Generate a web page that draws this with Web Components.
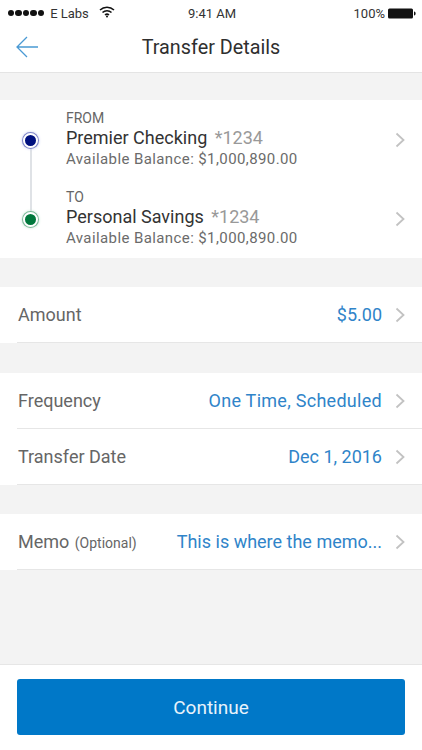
<!DOCTYPE html>
<html>
<head>
<meta charset="utf-8">
<title>Transfer Details</title>
<style>
    html, body { margin: 0; padding: 0; height: 100%; }
    body { font-family: Roboto, "Liberation Sans", sans-serif; background: #f3f3f3; overflow: hidden; }
</style>
</head>
<body>
<transfer-screen>
    <status-bar></status-bar>
    <nav-header title="Transfer Details"></nav-header>
    <div slot="content">
        <account-card></account-card>
        <detail-group gap="29">
            <detail-row label="Amount" value="$5.00"></detail-row>
        </detail-group>
        <detail-group gap="30">
            <detail-row label="Frequency" value="One Time, Scheduled" spacing="0.28"></detail-row>
            <detail-row label="Transfer Date" value="Dec 1, 2016"></detail-row>
        </detail-group>
        <detail-group gap="29">
            <detail-row label="Memo" note="(Optional)" value="This is where the memo..."></detail-row>
        </detail-group>
    </div>
    <footer-button slot="footer" label="Continue"></footer-button>
</transfer-screen>

<script>
const CHEVRON = /*html*/`
    <svg class="chevron" width="10" height="16" viewBox="0 0 10 16" fill="none">
        <path d="M1.5 1.5 L8.5 8 L1.5 14.5" stroke="#c2c2c2" stroke-width="1.8"/>
    </svg>
`;

class TransferScreen extends HTMLElement {
    connectedCallback() {
        this.attachShadow({mode: 'open'});
        this.shadowRoot.innerHTML = /*html*/`
            <style>
                :host {
                    display: flex;
                    flex-direction: column;
                    width: 422px;
                    height: 750px;
                    background: #f3f3f3;
                }
                #content { flex: 1; padding-top: 27px; }
            </style>
            <slot></slot>
            <div id="content"><slot name="content"></slot></div>
            <slot name="footer"></slot>
        `;
    }
}

class StatusBar extends HTMLElement {
    connectedCallback() {
        this.attachShadow({mode: 'open'});
        this.shadowRoot.innerHTML = /*html*/`
            <style>
                :host {
                    display: grid;
                    grid-template-columns: 1fr auto 1fr;
                    align-items: center;
                    height: 26px;
                    padding: 0 6px 0 8px;
                    background: #fff;
                    color: #333;
                    font-size: 13px;
                }
                .left, .right { display: flex; align-items: center; }
                .right { justify-content: flex-end; gap: 3px; }
                .dots { display: flex; gap: 1.3px; margin-right: 6px; }
                .dots i { width: 6.2px; height: 6.2px; border-radius: 50%; background: #111; }
                .wifi { margin-left: 10px; margin-top: -3px; }
            </style>
            <div class="left">
                <span class="dots"><i></i><i></i><i></i><i></i><i></i></span>
                <span>E Labs</span>
                <svg class="wifi" width="16" height="12" viewBox="0 0 16 12" fill="none" stroke="#111">
                    <path d="M1 4 A10 10 0 0 1 15 4" stroke-width="1.5"/>
                    <path d="M3.5 6.5 A6.5 6.5 0 0 1 12.5 6.5" stroke-width="1.5"/>
                    <path d="M6 9 A3 3 0 0 1 10 9" stroke-width="1.5"/>
                    <circle cx="8" cy="10.6" r="1" fill="#111" stroke="none"/>
                </svg>
            </div>
            <div>9:41 AM</div>
            <div class="right">
                <span>100%</span>
                <svg width="28" height="11" viewBox="0 0 28 11">
                    <rect x="0" y="0.5" width="25" height="10" rx="1.5" fill="#111"/>
                    <path d="M26 3.5 C27.3 3.8 27.6 4.5 27.6 5.5 C27.6 6.5 27.3 7.2 26 7.5 Z" fill="#111"/>
                </svg>
            </div>
        `;
    }
}

class NavHeader extends HTMLElement {
    connectedCallback() {
        this.attachShadow({mode: 'open'});
        this.shadowRoot.innerHTML = /*html*/`
            <style>
                :host {
                    display: grid;
                    grid-template-columns: 60px 1fr 60px;
                    align-items: center;
                    height: 42px;
                    padding-bottom: 4px;
                    background: #fff;
                    border-bottom: 1px solid #e4e4e4;
                }
                svg { margin-left: 16px; }
                h1 {
                    margin: 0;
                    text-align: center;
                    font-size: 19.8px;
                    font-weight: 400;
                    color: #2f2f2f;
                }
            </style>
            <svg width="22" height="22" viewBox="0 0 22 22" fill="none" stroke="#4a9ad4" stroke-width="1.3">
                <path d="M22 11 H1 M11 1 L1 11 L11 21"/>
            </svg>
            <h1>${this.getAttribute("title")}</h1>
            <span></span>
        `;
    }
}

class AccountCard extends HTMLElement {
    #makeAccount(cls, label, name, balance) {
        return /*html*/`
            <div class="account ${cls}">
                <div class="dot"></div>
                <div class="text">
                    <div class="label">${label}</div>
                    <div class="name">${name} <span>*1234</span></div>
                    <div class="balance">${balance}</div>
                </div>
                ${CHEVRON}
            </div>
        `;
    }

    connectedCallback() {
        this.attachShadow({mode: 'open'});
        const balance = "Available Balance: $1,000,890.00";
        this.shadowRoot.innerHTML = /*html*/`
            <style>
                :host {
                    display: block;
                    position: relative;
                    background: #fff;
                    height: 158px;
                    box-sizing: border-box;
                    padding-top: 6px;
                }
                .line {
                    position: absolute;
                    left: 30px;
                    top: 40px;
                    width: 1.5px;
                    height: 78px;
                    background: #dfe2e6;
                }
                .account {
                    display: flex;
                    align-items: center;
                    height: 68px;
                    padding: 0 17px 0 23px;
                    position: relative;
                }
                .account + .account { margin-top: 11px; }
                .dot {
                    width: 11px;
                    height: 11px;
                    border-radius: 50%;
                    border: 2px solid #fff;
                    flex: none;
                    margin-right: 28px;
                }
                .from .dot { background: #00107f; box-shadow: 0 0 0 1px #7f86c8, 0 0 3px 1px #c9cdf0; }
                .to .dot { background: #00783c; box-shadow: 0 0 0 1px #7fba9b, 0 0 3px 1px #c5e6d3; }
                .text { flex: 1; }
                .label { font-size: 14px; line-height: 15px; color: #666; }
                .name { font-size: 18px; line-height: 24px; color: #333; }
                .name span { color: #999; margin-left: 3px; }
                .balance { font-size: 15px; line-height: 19px; color: #6b6b6b; letter-spacing: 0.4px; }
            </style>
            <div class="line"></div>
            ${this.#makeAccount("from", "FROM", "Premier Checking", balance)}
            ${this.#makeAccount("to", "TO", "Personal Savings", balance)}
        `;
    }
}

class DetailGroup extends HTMLElement {
    connectedCallback() {
        this.attachShadow({mode: 'open'});
        this.shadowRoot.innerHTML = /*html*/`
            <style>
                :host {
                    display: block;
                    background: #fff;
                    margin-top: ${this.getAttribute("gap")}px;
                }
            </style>
            <slot></slot>
        `;
    }
}

class DetailRow extends HTMLElement {
    connectedCallback() {
        this.attachShadow({mode: 'open'});
        const note = this.getAttribute("note");
        this.shadowRoot.innerHTML = /*html*/`
            <style>
                :host {
                    display: block;
                    margin-left: 17px;
                    border-bottom: 1px solid #e6e6e6;
                }
                #row {
                    display: flex;
                    align-items: center;
                    height: 55px;
                    padding-right: 17px;
                    font-size: 18px;
                }
                #label { flex: 1; color: #666; padding-left: 1px; }
                #note { font-size: 14px; margin-left: 2px; }
                #value {
                    color: #2f84c9;
                    margin-right: 13px;
                    letter-spacing: ${this.getAttribute("spacing") || 0}px;
                }
            </style>
            <div id="row">
                <div id="label">${this.getAttribute("label")}${note ? `<span id="note"> ${note}</span>` : ""}</div>
                <div id="value">${this.getAttribute("value")}</div>
                ${CHEVRON}
            </div>
        `;
    }
}

class FooterButton extends HTMLElement {
    connectedCallback() {
        this.attachShadow({mode: 'open'});
        this.shadowRoot.innerHTML = /*html*/`
            <style>
                :host {
                    display: block;
                    background: #fff;
                    border-top: 1px solid #e6e6e6;
                    padding: 14px 17px 15px;
                }
                button {
                    display: block;
                    width: 100%;
                    height: 56px;
                    border: none;
                    border-radius: 3px;
                    background: #0078c8;
                    color: #e8f3fb;
                    font: inherit;
                    font-size: 19px;
                }
            </style>
            <button>${this.getAttribute("label")}</button>
        `;
    }
}

customElements.define('transfer-screen', TransferScreen);
customElements.define('status-bar', StatusBar);
customElements.define('nav-header', NavHeader);
customElements.define('account-card', AccountCard);
customElements.define('detail-group', DetailGroup);
customElements.define('detail-row', DetailRow);
customElements.define('footer-button', FooterButton);
</script>
</body>
</html>
